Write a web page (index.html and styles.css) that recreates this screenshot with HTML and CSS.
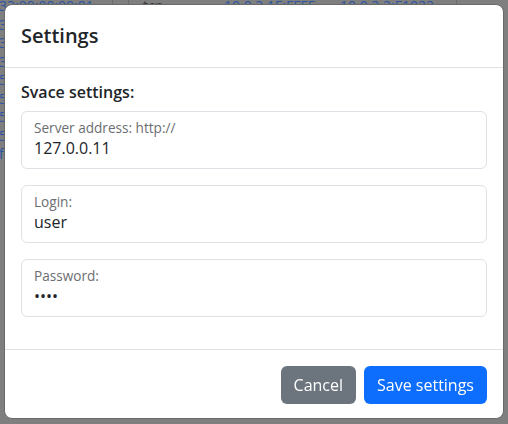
FILE: index.html
```html
<!DOCTYPE html>
<html lang="en">
<head>
<meta charset="utf-8">
<title>Settings</title>
<link rel="stylesheet" href="styles.css">
</head>
<body>
<table class="bg-table">
  <tr><td class="c1">33:00:00:00:01</td><td class="c2"></td><td class="c3">tcp</td><td class="c4">10.0.2.1F:FFFF</td><td class="c5">10.0.2.2:F1022</td></tr>
  <tr><td class="c1">33:00:00:00:02</td><td class="c2"></td><td class="c3">tcp</td><td class="c4">10.0.2.1F:FFFF</td><td class="c5">10.0.2.2:F1023</td></tr>
  <tr><td class="c1">33:00:00:00:03</td><td class="c2"></td><td class="c3">tcp</td><td class="c4">10.0.2.1F:FFFF</td><td class="c5">10.0.2.2:F1024</td></tr>
  <tr><td class="c1">33:00:00:00:04</td><td class="c2"></td><td class="c3">tcp</td><td class="c4">10.0.2.1F:FFFF</td><td class="c5">10.0.2.2:F1025</td></tr>
  <tr><td class="c1">55:00:00:00:01</td><td class="c2"></td><td class="c3">udp</td><td class="c4">10.0.2.1F:FFFF</td><td class="c5">10.0.2.2:F1026</td></tr>
  <tr><td class="c1">55:00:00:00:02</td><td class="c2"></td><td class="c3">udp</td><td class="c4">10.0.2.1F:FFFF</td><td class="c5">10.0.2.2:F1027</td></tr>
  <tr><td class="c1">55:00:00:00:03</td><td class="c2"></td><td class="c3">udp</td><td class="c4">10.0.2.1F:FFFF</td><td class="c5">10.0.2.2:F1028</td></tr>
  <tr><td class="c1">55:00:00:00:04</td><td class="c2"></td><td class="c3">udp</td><td class="c4">10.0.2.1F:FFFF</td><td class="c5">10.0.2.2:F1029</td></tr>
  <tr><td class="c1">ff</td><td class="c2"></td><td class="c3">tcp</td><td class="c4">10.0.2.1F:FFFF</td><td class="c5">10.0.2.2:F1030</td></tr>
</table>

<div class="modal">
  <div class="modal-header">
    <h5 class="modal-title">Settings</h5>
  </div>
  <div class="modal-body">
    <div class="section-label">Svace settings:</div>
    <div class="float-field">
      <label class="float-label" for="addr">Server address: http://</label>
      <input class="float-input" id="addr" type="text" value="127.0.0.11">
    </div>
    <div class="float-field">
      <label class="float-label" for="login">Login:</label>
      <input class="float-input" id="login" type="text" value="user">
    </div>
    <div class="float-field">
      <label class="float-label" for="pass">Password:</label>
      <input class="float-input" id="pass" type="password" value="test">
    </div>
  </div>
  <div class="modal-footer">
    <button class="btn btn-secondary" type="button">Cancel</button>
    <button class="btn btn-primary" type="button">Save settings</button>
  </div>
</div>
</body>
</html>
```

FILE: styles.css
```css
html, body {
  margin: 0;
  padding: 0;
}
body {
  background: #7f7f7f;
  font-family: "Open Sans", "Noto Sans", sans-serif;
  color: #212529;
  width: 508px;
  height: 424px;
  overflow: hidden;
}

.bg-table {
  border-collapse: collapse;
  margin-top: -3px;
  margin-left: -1px;
  font-family: "Open Sans", sans-serif;
  font-size: 14px;
  color: #2c55a3;
}
.bg-table tr {
  height: 18.5px;
}
.bg-table td {
  padding: 0;
  line-height: 18px;
  white-space: nowrap;
  vertical-align: middle;
}
.bg-table .c1 { width: 113px; min-width: 113px; border-right: 1px solid #6d6d6d; }
.bg-table .c2 { width: 15px; min-width: 15px; border-right: 1px solid #6d6d6d; }
.bg-table .c3 { width: 81px; min-width: 81px; padding-left: 14px; color: #3a3a3a; }
.bg-table .c4 { width: 116px; min-width: 116px; }
.bg-table .c5 { width: 116px; min-width: 116px; border-right: 1px solid #6d6d6d; }

.modal {
  position: fixed;
  left: 4px;
  top: 4px;
  width: 500px;
  box-sizing: border-box;
  background: #fff;
  border: 1px solid #6a6a6a;
  border-radius: 8px;
  display: flex;
  flex-direction: column;
}

.modal-header {
  padding: 16px;
  border-bottom: 1px solid #dee2e6;
}
.modal-title {
  margin: 0;
  font-size: 20px;
  line-height: 30px;
  font-weight: 600;
}

.modal-body {
  padding: 16px;
}
.section-label {
  font-size: 16px;
  font-weight: 600;
  line-height: 20px;
  margin-top: -2px;
  margin-bottom: 9px;
}
.float-field {
  display: flex;
  flex-direction: column;
  height: 58px;
  box-sizing: border-box;
  border: 1px solid #dee2e6;
  border-radius: 6px;
  padding: 7px 12px 0;
  margin-bottom: 16px;
}
.float-label {
  font-size: 13.6px;
  line-height: 18px;
  color: #6b6e71;
}
.float-input {
  border: none;
  outline: none;
  padding: 0;
  margin: 0;
  font-family: inherit;
  font-size: 16px;
  line-height: 22px;
  height: 22px;
  color: #212529;
  background: transparent;
}

.modal-footer {
  border-top: 1px solid #dee2e6;
  padding: 16px 16px 14px;
  display: flex;
  justify-content: flex-end;
  gap: 8px;
}
.btn {
  font-family: inherit;
  font-size: 16px;
  line-height: 24px;
  padding: 6px 12px;
  border: 1px solid transparent;
  border-radius: 6px;
  color: #fff;
  height: 38px;
  box-sizing: border-box;
}
.btn-secondary { background: #6c757d; }
.btn-primary { background: #0d6efd; }
```
